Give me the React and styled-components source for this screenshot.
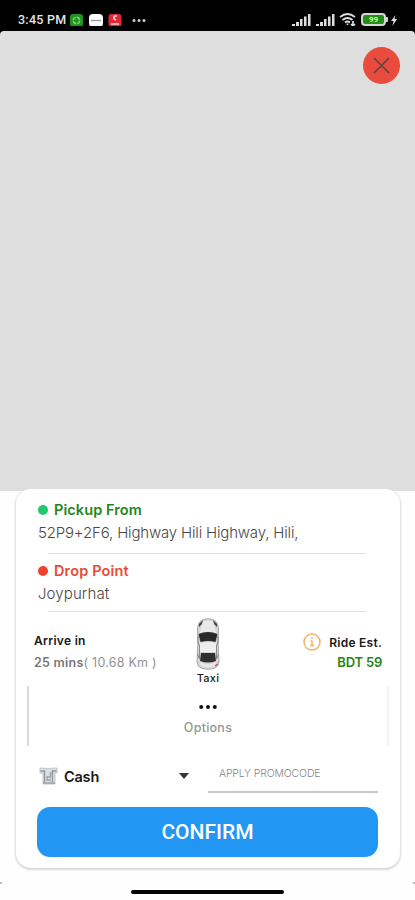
import React from "react";
import styled, { createGlobalStyle } from "styled-components";

const GlobalStyle = createGlobalStyle`
  * { box-sizing: border-box; }
  body { margin: 0; background: #fefefe; font-family: Inter, "Liberation Sans", sans-serif; }
`;

const Screen = styled.main`
  width: 415px;
  height: 900px;
  overflow: hidden;
  display: flex;
  flex-direction: column;
  background: #fefefe;
`;

const StatusBar = styled.header`
  height: 31px;
  flex: none;
  padding: 9px 17px 0 18px;
  display: flex;
  justify-content: space-between;
  background: #000;
  color: #e4e4e4;
`;

const StatusGroup = styled.div`
  display: flex;
  align-items: center;
  height: 21px;
  gap: ${(p) => p.$gap || 0}px;
`;

const Clock = styled.span`
  width: 50px;
  font: 500 12.5px/20px Roboto, sans-serif;
  letter-spacing: 0.25px;
  white-space: nowrap;
`;

const MapArea = styled.section`
  height: 460px;
  flex: none;
  display: flex;
  justify-content: flex-end;
  align-items: flex-start;
  padding: 16px 15px 0 0;
  background: #dedede;
  border-radius: 4px 4px 0 0;
  box-shadow: 0 -5px 0 #000;
`;

const CloseButton = styled.button`
  width: 37px;
  height: 37px;
  padding: 0;
  border: 0;
  border-radius: 50%;
  display: grid;
  place-items: center;
  background: #e94b3d;
`;

const Card = styled.section`
  width: 384px;
  height: 379px;
  flex: none;
  margin: -2px 0 0 16px;
  padding-top: 10px;
  display: flex;
  flex-direction: column;
  background: #fff;
  border-radius: 15px;
  box-shadow: 0 1px 2px 1px #d8d8d8;
  clip-path: inset(0 -4px -6px -4px);
`;

const Place = styled.div`
  height: ${(p) => p.$height}px;
  width: 318px;
  margin-left: 32px;
  padding-top: ${(p) => p.$top || 0}px;
  border-bottom: 1px solid #dfdfdf;
`;

const PlaceTitle = styled.div`
  height: 21px;
  margin-left: -10px;
  display: flex;
  align-items: center;
  gap: 6px;
  color: ${(p) => p.$color};
  font-size: 14.5px;
  font-weight: 600;
  letter-spacing: ${(p) => p.$spacing}px;

  &::before {
    content: "";
    width: 10px;
    height: 10px;
    border-radius: 50%;
    background: ${(p) => p.$dot};
  }
`;

const Address = styled.div`
  margin-left: -10px;
  padding-top: 2px;
  color: #484848;
  font-size: 15px;
  font-weight: 300;
  line-height: 21px;
  letter-spacing: ${(p) => p.$spacing}px;
  white-space: nowrap;
`;

const Trip = styled.div`
  height: 74px;
  padding: 0 18px 0 18px;
  display: grid;
  grid-template-columns: 146px 56px 1fr;
`;

const TripColumn = styled.div`
  display: flex;
  flex-direction: column;
  align-items: ${(p) => p.$align || "flex-start"};
  padding-top: ${(p) => p.$top}px;
  white-space: nowrap;
`;

const TripLabel = styled.div`
  display: flex;
  align-items: center;
  gap: 8px;
  height: 18px;
  color: #181818;
  font-size: 12px;
  font-weight: 600;
  letter-spacing: ${(p) => p.$spacing || 0}px;
`;

const Duration = styled.div`
  margin-top: 5px;
  color: #929292;
  font-size: 12.5px;
  line-height: 18px;
  letter-spacing: 0.24px;

  strong { color: #777; font-weight: 600; }
`;

const Fare = styled.div`
  margin-top: 2px;
  color: #258519;
  font-size: 13px;
  font-weight: 600;
  line-height: 18px;
  letter-spacing: -0.2px;
`;

const VehicleName = styled.div`
  color: #222;
  font-size: 11px;
  font-weight: 500;
  line-height: 16px;
  letter-spacing: 0.3px;
`;

const Options = styled.div`
  height: 60px;
  margin: 0 11px 0 11px;
  border-left: 2px solid #d9d9d9;
  border-right: 2px solid #f4f4f4;
  display: flex;
  flex-direction: column;
  align-items: center;
  padding-top: 19px;
  color: #929896;
  font-size: 12.5px;
  font-weight: 500;
  line-height: 18px;
  letter-spacing: 0.25px;
`;

const DotsIcon = styled.svg`
  flex: none;
  margin-bottom: 10px;
`;

const Payment = styled.div`
  height: 61px;
  padding: 9px 22px 0 23px;
  display: flex;
  align-items: flex-start;
`;

const Method = styled.div`
  width: 150px;
  margin-right: 19px;
  height: 42px;
  display: flex;
  align-items: center;
  gap: 6px;
  color: #171717;
  font-size: 14.5px;
  font-weight: 600;
  letter-spacing: -0.2px;

  svg:last-child { margin-left: auto; }
`;

const Promo = styled.input`
  width: 170px;
  height: 38px;
  padding: 0 0 0 11px;
  border: 0;
  border-bottom: 2px solid #c9c9c9;
  border-radius: 0;
  outline: none;
  background: transparent;
  font: 300 10.5px/14px Inter, sans-serif;
  letter-spacing: -0.15px;

  &::placeholder { color: #858585; opacity: 1; }
`;

const Confirm = styled.button`
  width: 341px;
  height: 50px;
  flex: none;
  margin-left: 21px;
  padding: 0;
  border: 0;
  border-radius: 13px;
  background: #2196f3;
  color: #fff;
  font: 500 21px/50px Roboto, sans-serif;
`;

const Footer = styled.footer`
  height: 32px;
  flex: none;
  padding-top: 14px;
  display: flex;
  justify-content: space-between;
`;

const EdgeMark = styled.span`
  width: 2px;
  height: 2px;
  background: #bdbdbd;
`;

const HomeIndicator = styled.div`
  width: 153px;
  height: 4px;
  margin-top: 8px;
  border-radius: 2px;
  background: #050505;
`;

const AppIcons = () => (
  <svg width="80" height="18" viewBox="0 0 80 18">
    <rect x="2" y="3" width="13" height="13" rx="3" fill="#20921f" />
    <circle cx="8.5" cy="9.5" r="3.2" fill="none" stroke="#83d275" strokeWidth="1.5" strokeDasharray="4 1" />
    <rect x="21" y="3" width="14" height="13" rx="4" fill="#fff" />
    <path d="M23 9.5h10" stroke="#999" strokeWidth="1.3" />
    <rect x="40.500" y="3" width="13" height="13" rx="3" fill="#e32636" />
    <path d="M49 5q-4-1-3 3l2 1M43 13h8" fill="none" stroke="#ffd6d8" strokeWidth="1.7" />
    <g fill="#ccc"><circle cx="66" cy="9.500" r="1.500" /><circle cx="71" cy="9.500" r="1.500" /><circle cx="76" cy="9.500" r="1.500" /></g>
  </svg>
);

const Signal = () => (
  <svg width="20" height="14" viewBox="0 0 20 14" fill="#ddd">
    <path d="M1 11h3v2H1zM5 9h3v4H5zM9 6h2.500v7H9zM13 3.500h2.500v9.500H13zM17 1h2.500v12H17z" />
  </svg>
);

const Wifi = () => (
  <svg width="18" height="15" viewBox="0 0 18 15" fill="none" stroke="#ddd" strokeWidth="1.7">
    <path d="M1 5q7.500-6 15 0M3.500 8q5-4 10 0M6 10.500q2.500-2 5 0" />
    <path d="M8.500 11.500v1.500M14 9v5M12 12l2 2 2-2" />
  </svg>
);

const Battery = styled.div`
  display: flex;
  align-items: center;

  &::after {
    content: "";
    width: 2px;
    height: 5px;
    background: #d1d9d0;
    border-radius: 0 1px 1px 0;
  }
`;

const BatteryShape = styled.div`
  width: 25px;
  height: 13px;
  border: 2px solid #d1d9d0;
  border-radius: 4px;
  background: #258e19;
  color: #bfff92;
  font: 700 8px/9px Roboto, sans-serif;
  text-align: center;
`;

const Charge = () => (
  <svg width="8" height="14" viewBox="0 0 8 14" fill="#ddd">
    <path d="M5.500 2L1 8h2.500l-1 5L7 6H4.500z" />
  </svg>
);

const Taxi = () => (
  <svg width="26" height="52" viewBox="0 0 26 52">
    <path d="M7 2Q13-1 19 2q4 2 4.500 8l-.3 14 .8 20q-.5 5-5 6.500-6 1.500-12 0Q2.500 49 2 44l.8-20L2.500 10Q3 4 7 2Z" fill="#d6d6d6" stroke="#aaa" />
    <path d="M7 4q6-3 12 0l2 11q-8-3-16 0Z" fill="#e9e9e9" />
    <path d="M4 9V6l4-4-1 4ZM22 9V6l-4-4 1 4Z" fill="#454545" />
    <path d="M3.500 16q9.500-4 19 0l-2 8q-7-2-15 0Z" fill="#292929" />
    <path d="M5 25q8-1.500 16 0v9H5Z" fill="#eee" />
    <path d="M6 35h14l1 8q-8 3-16 0Z" fill="#303030" />
    <path d="M5 44q8 4 16 0l-1 4q-7 3-14 0Z" fill="#e6e6e6" />
    <path d="M3 18v7l1.500 2v14l-2-5M23 18v7L21.500 27v14l2-5" fill="none" stroke="#888" />
    <path d="M20 48l3-2" stroke="#d74d5c" strokeWidth="1.500" />
  </svg>
);

const Info = () => (
  <svg width="18" height="18" viewBox="0 0 18 18" fill="none" stroke="#efb667" strokeWidth="1.5">
    <circle cx="9" cy="9" r="8" />
    <path d="M9 7.500v5M7 12.500h4M7.500 8H9M9 4v2" />
  </svg>
);

const CashIcon = () => (
  <svg width="19" height="18" viewBox="0 0 19 18">
    <path d="M1 1q8.500 1 17 0v5h-2v11H4V6H1Z" fill="#dce0e2" stroke="#c0c5c8" />
    <path d="M1.500 4H5M14 4h3.500M5.500 3v12M13.500 3v12" fill="none" stroke="#929aa0" strokeWidth="1.4" />
    <path d="M11.500 5v5H8v3h4M4 16h12" fill="none" stroke="#9aa2a8" strokeWidth="1.4" />
  </svg>
);

export default function App() {
  return (
    <>
      <GlobalStyle />
      <Screen>
        <StatusBar>
          <StatusGroup><Clock>3:45 PM</Clock><AppIcons /></StatusGroup>
          <StatusGroup $gap={4}>
            <Signal /><Signal /><Wifi />
            <StatusGroup $gap={2}><Battery><BatteryShape>99</BatteryShape></Battery><Charge /></StatusGroup>
          </StatusGroup>
        </StatusBar>
        <MapArea>
          <CloseButton aria-label="Close">
            <svg width="17" height="17" viewBox="0 0 17 17" stroke="#624447" strokeWidth="1.7">
              <path d="M1 1l15 15M16 1L1 16" />
            </svg>
          </CloseButton>
        </MapArea>
        <Card>
          <Place $height={55}>
            <PlaceTitle $color="#258519" $dot="#22c96b" $spacing={0.08}>Pickup From</PlaceTitle>
            <Address $spacing={-0.17}>52P9+2F6, Highway Hili Highway, Hili,</Address>
          </Place>
          <Place $height={58} $top={6}>
            <PlaceTitle $color="#ea4938" $dot="#ed452d" $spacing={0.15}>Drop Point</PlaceTitle>
            <Address $spacing={0.1}>Joypurhat</Address>
          </Place>
          <Trip>
            <TripColumn $top={19}>
              <TripLabel $spacing={0.3}>Arrive in</TripLabel>
              <Duration><strong>25 mins</strong>( 10.68 Km )</Duration>
            </TripColumn>
            <TripColumn $top={6} $align="center">
              <Taxi />
              <VehicleName>Taxi</VehicleName>
            </TripColumn>
            <TripColumn $top={21} $align="flex-end">
              <TripLabel $spacing={0.25}><Info />Ride Est.</TripLabel>
              <Fare>BDT 59</Fare>
            </TripColumn>
          </Trip>
          <Options>
            <DotsIcon width="18" height="4" viewBox="0 0 18 4" fill="#111">
              <circle cx="2.200" cy="2" r="2" /><circle cx="9" cy="2" r="2" /><circle cx="15.800" cy="2" r="2" />
            </DotsIcon>
            Options
          </Options>
          <Payment>
            <Method>
              <CashIcon />Cash
              <svg width="10" height="6" viewBox="0 0 10 6"><path d="M0 0h10L5 6Z" fill="#333" /></svg>
            </Method>
            <Promo placeholder="APPLY PROMOCODE" aria-label="Promo code" />
          </Payment>
          <Confirm>CONFIRM</Confirm>
        </Card>
        <Footer>
          <EdgeMark />
          <HomeIndicator />
          <EdgeMark />
        </Footer>
      </Screen>
    </>
  );
}
